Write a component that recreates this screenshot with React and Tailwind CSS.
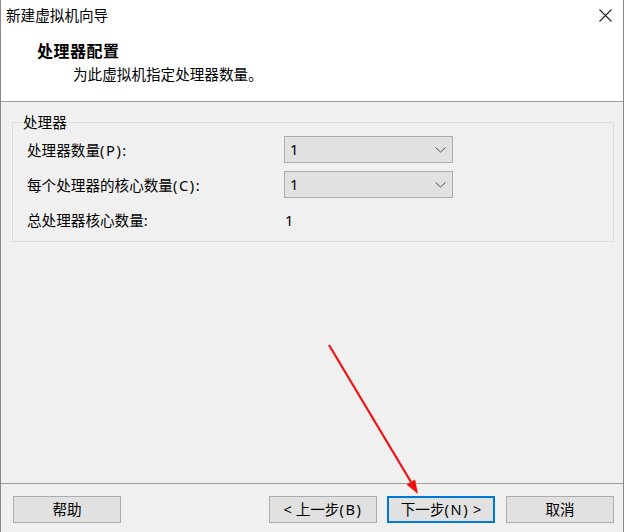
import React from 'react'

const font = { fontFamily: '"Noto Sans", "Noto Sans CJK SC", sans-serif' }

// Latin bits in the reference render wider than Noto Sans
function L({ children }) {
  return <span className="tracking-[1.6px]">{children}</span>
}

function Combo({ value }) {
  return (
    <div className="h-[27px] w-[169px] bg-[#e1e1e1] border border-[#adadad] flex items-center justify-between pl-[5px] pr-[6px]">
      <span>{value}</span>
      <svg width="11" height="6" viewBox="0 0 11 6" fill="none">
        <path d="M0.5 0.5 L5.5 5 L10.5 0.5" stroke="#555" strokeWidth="1" />
      </svg>
    </div>
  )
}

function Button({ children, primary, className = '' }) {
  return (
    <button
      className={`h-[27px] w-[108px] bg-[#e1e1e1] flex items-center justify-center leading-none ${
        primary ? 'border-2 border-[#0078d7]' : 'border border-[#adadad]'
      } ${className}`}
    >
      {children}
    </button>
  )
}

export default function App() {
  return (
    <div style={font} className="w-[625px] h-[532px] bg-white relative overflow-hidden text-[14.6px] text-[#000]">
      <div className="w-[624px] h-full bg-[#f0f0f0] border-l border-r border-[#8a8a8a] flex flex-col">
        {/* header */}
        <div className="h-[102px] bg-white border-b border-[#a0a0a0] shrink-0">
          <div className="h-[30px] flex items-center justify-between pl-[5px] pr-[11px]">
            <span className="leading-[20px]">新建虚拟机向导</span>
            <svg width="13" height="13" viewBox="0 0 13 13">
              <path d="M0.5 0.5 L12.5 12.5 M12.5 0.5 L0.5 12.5" stroke="#222" strokeWidth="1.1" />
            </svg>
          </div>
          <div className="mt-[11px] ml-[36px] font-bold text-[16px] leading-[20px] tracking-[0.5px]">处理器配置</div>
          <div className="mt-[3px] ml-[72px] leading-[20px]">为此虚拟机指定处理器数量。</div>
        </div>

        {/* body */}
        <div className="flex-1">
          <div className="relative mt-[20px] ml-[11px] w-[602px] border border-[#dcdcdc] pl-[14px] pt-[13px] pb-[8px]">
            <span className="absolute -top-[11px] left-[9px] px-[1px] bg-[#f0f0f0] leading-[20px]">处理器</span>
            <div className="grid grid-cols-[257px_169px] gap-y-[8px] items-center">
              <div className="leading-[20px]">处理器数量<L>(P):</L></div>
              <Combo value="1" />
              <div className="leading-[20px]">每个处理器的核心数量<L>(C):</L></div>
              <Combo value="1" />
              <div className="leading-[20px] h-[27px] flex items-center">总处理器核心数量:</div>
              <div className="pl-[1px] leading-[20px]">1</div>
            </div>
          </div>
        </div>

        {/* footer */}
        <div className="h-[49px] shrink-0 border-t border-[#a0a0a0] flex items-start pt-[12px] pl-[12px] pr-[9px]">
          <Button className="w-[107px]">帮助</Button>
          <div className="flex-1" />
          <Button>&lt; 上一步<L>(B)</L></Button>
          <Button primary className="ml-[10px]">下一步<L>(N)</L>&nbsp;&gt;</Button>
          <Button className="ml-[11px] w-[107px]">取消</Button>
        </div>
      </div>

      {/* annotation arrow */}
      <svg className="absolute left-0 top-0 pointer-events-none" width="625" height="532">
        <line x1="329" y1="345" x2="411" y2="482" stroke="#f01010" strokeWidth="2.2" />
        <polygon points="418,494 406.5,484.6 415.1,479.4" fill="#f01010" />
      </svg>
    </div>
  )
}
